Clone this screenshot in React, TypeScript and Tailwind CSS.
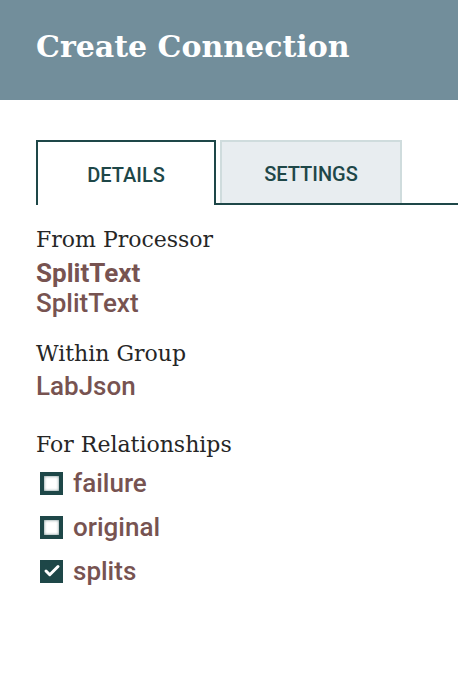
import { Check } from "lucide-react";

const serif = "font-['Roboto_Slab','DejaVu_Serif',serif]";
const sans = "font-['Roboto','Liberation_Sans',sans-serif]";

const Box = ({ checked }: { checked?: boolean }) =>
    checked ? (
        <span className="w-[23px] h-[23px] bg-[#1e4748] flex items-center justify-center">
            <Check className="w-[18px] h-[18px] text-white" strokeWidth={4} />
        </span>
    ) : (
        <span className="w-[23px] h-[23px] border-[4px] border-[#1e4748] bg-white shadow-[inset_0_0_3px_rgba(30,71,72,0.7)]" />
    );

const relationships = [
    { name: "failure", checked: false },
    { name: "original", checked: false },
    { name: "splits", checked: true },
];

export default function App() {
    return (
        <div className="w-[458px] h-[696px] bg-white overflow-hidden">
            {/* Header */}
            <header className="h-[100px] bg-[#728e9b] flex items-center px-[36px] pb-[8px]">
                <h1 className={`${serif} text-white font-bold text-[30px]`}>
                    Create Connection
                </h1>
            </header>

            {/* Tabs */}
            <div className="mt-[40px] flex items-end pl-[36px]">
                <div className={`${sans} w-[180px] h-[65px] pt-[3px] border-2 border-b-0 border-[#1e4748] flex items-center justify-center text-[20px] font-medium text-[#1e4748]`}>
                    DETAILS
                </div>
                <div className="flex-1 flex items-end border-b-2 border-[#1e4748] pl-[4px]">
                    <div className={`${sans} w-[182px] h-[63px] pt-[3px] bg-[#e8edf0] border-2 border-b-0 border-[#cfdcdd] flex items-center justify-center text-[20px] font-medium text-[#1e4748]`}>
                        SETTINGS
                    </div>
                </div>
            </div>

            {/* Details */}
            <div className="px-[36px] pt-[21px]">
                <div className={`${serif} text-[22px] text-[#262626] leading-[28px]`}>From Processor</div>
                <div className={`${sans} text-[26px] font-bold text-[#775351] leading-[30px] mt-[4px]`}>SplitText</div>
                <div className={`${sans} text-[26px] font-medium text-[#775351] leading-[30px]`}>SplitText</div>

                <div className={`${serif} text-[22px] text-[#262626] leading-[28px] mt-[22px]`}>Within Group</div>
                <div className={`${sans} text-[26px] font-medium text-[#775351] leading-[30px] mt-[3px]`}>LabJson</div>

                <div className={`${serif} text-[22px] text-[#262626] leading-[28px] mt-[30px]`}>For Relationships</div>
                <div className="flex flex-col gap-[14px] mt-[9px] pl-[4px]">
                    {relationships.map((r) => (
                        <label key={r.name} className="flex items-center gap-[10px] h-[30px]">
                            <Box checked={r.checked} />
                            <span className={`${sans} text-[26px] font-medium text-[#775351] leading-[30px]`}>{r.name}</span>
                        </label>
                    ))}
                </div>
            </div>
        </div>
    );
}
